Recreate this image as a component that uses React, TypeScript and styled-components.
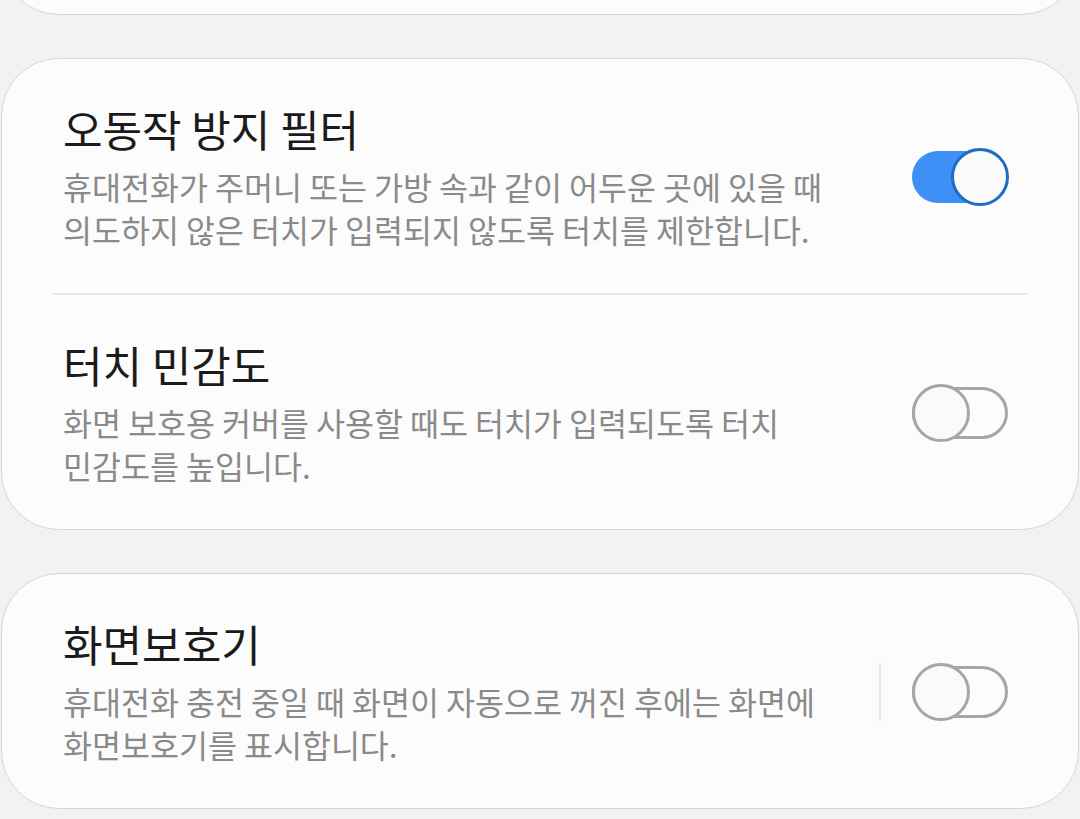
import React from 'react';
import styled, { createGlobalStyle } from 'styled-components';

const GlobalStyle = createGlobalStyle`
  html, body {
    margin: 0;
    padding: 0;
    background: #f2f2f2;
    overflow: hidden;
  }
  * {
    box-sizing: border-box;
  }
`;

const Screen = styled.div`
  height: 819px;
  display: flex;
  flex-direction: column;
  justify-content: flex-end;
  gap: 43px;
  padding: 0 1px 10px;
  overflow: hidden;
  font-family: "Noto Sans CJK KR", "Noto Sans", sans-serif;
`;

const Card = styled.section`
  flex-shrink: 0;
  background: #fcfcfc;
  border: 1px solid #d6d6d6;
  border-radius: 58px;
`;

const PeekCard = styled(Card)`
  height: 120px;
`;

const Row = styled.div`
  display: flex;
  align-items: center;
  padding: 43px 69px 42px 61px;
`;

const TextBlock = styled.div`
  flex: 1;
  min-width: 0;
`;

const Title = styled.div`
  font-size: 43px;
  line-height: 52px;
  color: #1b1b1b;
  white-space: nowrap;
`;

const Description = styled.div`
  margin-top: 11px;
  font-size: 31.5px;
  line-height: 43px;
  color: #8a8a8a;
  white-space: nowrap;
`;

const Divider = styled.div`
  height: 2px;
  margin: 0 50px;
  background: #e7e7e7;
`;

const VerticalRule = styled.div`
  width: 2px;
  height: 58px;
  margin-right: 31px;
  background: #e4e4e4;
`;

const ToggleWrap = styled.div`
  position: relative;
  width: 97px;
  height: 58px;
  flex-shrink: 0;
`;

const Track = styled.div<{ $on: boolean }>`
  height: 52px;
  margin: 3px 0;
  border-radius: 26px;
  background: ${p => (p.$on ? '#3e8ff6' : 'transparent')};
  border: ${p => (p.$on ? 'none' : '3px solid #a6a6a6')};
  width: ${p => (p.$on ? '90px' : '96px')};
`;

const Thumb = styled.div<{ $on: boolean }>`
  position: absolute;
  top: 0;
  ${p => (p.$on ? 'right: 0;' : 'left: 0;')}
  width: 58px;
  height: 58px;
  border-radius: 50%;
  background: #fafafa;
  border: 3px solid ${p => (p.$on ? '#1b6ec2' : '#a6a6a6')};
`;

const Toggle: React.FC<{ on?: boolean }> = ({ on = false }) => (
  <ToggleWrap>
    <Track $on={on} />
    <Thumb $on={on} />
  </ToggleWrap>
);

type Item = {
  title: string;
  lines: string[];
  on?: boolean;
  rule?: boolean;
};

const SettingRow: React.FC<{ item: Item }> = ({ item }) => (
  <Row>
    <TextBlock>
      <Title>{item.title}</Title>
      <Description>
        {item.lines.map((l, i) => (
          <div key={i}>{l}</div>
        ))}
      </Description>
    </TextBlock>
    {item.rule && <VerticalRule />}
    <Toggle on={item.on} />
  </Row>
);

const touchItems: Item[] = [
  {
    title: '오동작 방지 필터',
    lines: [
      '휴대전화가 주머니 또는 가방 속과 같이 어두운 곳에 있을 때',
      '의도하지 않은 터치가 입력되지 않도록 터치를 제한합니다.',
    ],
    on: true,
  },
  {
    title: '터치 민감도',
    lines: ['화면 보호용 커버를 사용할 때도 터치가 입력되도록 터치', '민감도를 높입니다.'],
  },
];

const screenSaver: Item = {
  title: '화면보호기',
  lines: ['휴대전화 충전 중일 때 화면이 자동으로 꺼진 후에는 화면에', '화면보호기를 표시합니다.'],
  rule: true,
};

export default function App() {
  return (
    <>
      <GlobalStyle />
      <Screen>
        <PeekCard />
        <Card>
          <SettingRow item={touchItems[0]} />
          <Divider />
          <SettingRow item={touchItems[1]} />
        </Card>
        <Card>
          <SettingRow item={screenSaver} />
        </Card>
      </Screen>
    </>
  );
}
